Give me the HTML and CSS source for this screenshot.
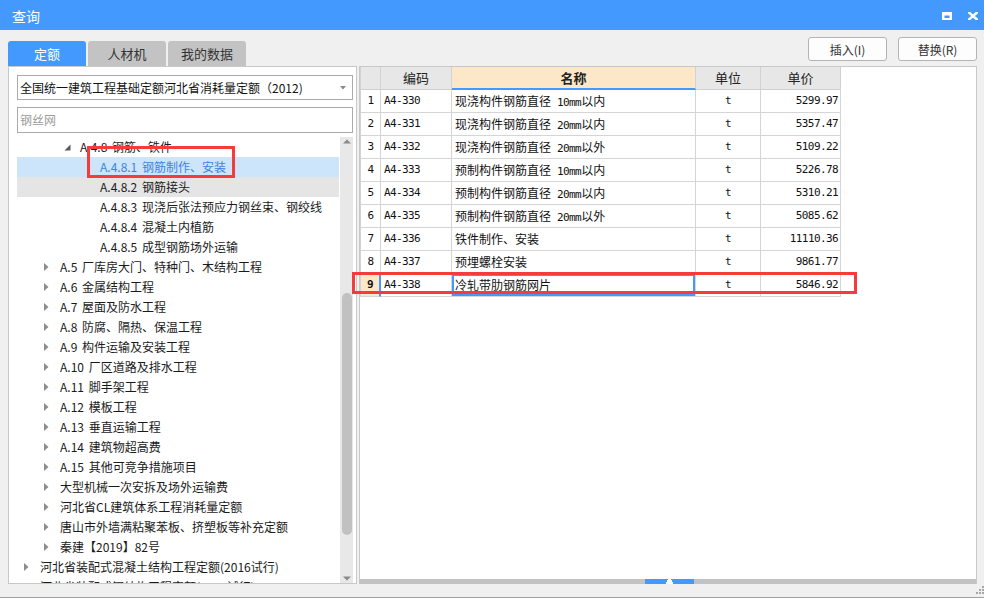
FILE: index.html
```html
<!DOCTYPE html>
<html lang="zh-CN">
<head>
<meta charset="utf-8">
<title>查询</title>
<link rel="stylesheet" href="styles.css">
</head>
<body>
<div class="window">
  <div class="titlebar">
    <span class="title">查询</span>
    <div class="win-ctrls">
      <svg class="ic" width="10" height="8" viewBox="0 0 10 8"><path d="M0 0H10V8H0Z M2.5 3.5V6H7.5V3.5Z" fill="#fff" fill-rule="evenodd"/></svg>
      <svg class="ic" width="10" height="8" viewBox="0 0 10 8"><path d="M1 0.5L9 7.5M9 0.5L1 7.5" stroke="#fff" stroke-width="2.4" stroke-linecap="square"/></svg>
    </div>
  </div>

  <div class="main">
    <div class="tabs">
      <div class="tab active">定额</div>
      <div class="tab">人材机</div>
      <div class="tab">我的数据</div>
    </div>
    <div class="actions">
      <button class="btn">插入(I)</button>
      <button class="btn">替换(R)</button>
    </div>

    <div class="left-panel">
      <div class="select"><span>全国统一建筑工程基础定额河北省消耗量定额（2012)</span><svg class="caret" width="6" height="4" viewBox="0 0 6 4"><path d="M0 0H6L3 3.5Z" fill="#8a8a8a"/></svg></div>
      <div class="search">钢丝网</div>
      <div class="tree-wrap">
        <ul class="tree">
          <li class="l3"><span class="arr"><svg width="7" height="7" viewBox="0 0 7 7"><path d="M6.5 0.5V6.5H0.5Z" fill="#595959"/></svg></span>A.4.8 钢筋、铁件</li>
          <li class="l4 selected"><span class="arr"></span>A.4.8.1 钢筋制作、安装</li>
          <li class="l4 hover"><span class="arr"></span>A.4.8.2 钢筋接头</li>
          <li class="l4"><span class="arr"></span>A.4.8.3 现浇后张法预应力钢丝束、钢绞线</li>
          <li class="l4"><span class="arr"></span>A.4.8.4 混凝土内植筋</li>
          <li class="l4"><span class="arr"></span>A.4.8.5 成型钢筋场外运输</li>
          <li class="l2"><span class="arr"><svg width="5" height="8" viewBox="0 0 5 8"><path d="M0 0L4.5 4L0 8Z" fill="#8c8c8c"/></svg></span>A.5 厂库房大门、特种门、木结构工程</li>
          <li class="l2"><span class="arr"><svg width="5" height="8" viewBox="0 0 5 8"><path d="M0 0L4.5 4L0 8Z" fill="#8c8c8c"/></svg></span>A.6 金属结构工程</li>
          <li class="l2"><span class="arr"><svg width="5" height="8" viewBox="0 0 5 8"><path d="M0 0L4.5 4L0 8Z" fill="#8c8c8c"/></svg></span>A.7 屋面及防水工程</li>
          <li class="l2"><span class="arr"><svg width="5" height="8" viewBox="0 0 5 8"><path d="M0 0L4.5 4L0 8Z" fill="#8c8c8c"/></svg></span>A.8 防腐、隔热、保温工程</li>
          <li class="l2"><span class="arr"><svg width="5" height="8" viewBox="0 0 5 8"><path d="M0 0L4.5 4L0 8Z" fill="#8c8c8c"/></svg></span>A.9 构件运输及安装工程</li>
          <li class="l2"><span class="arr"><svg width="5" height="8" viewBox="0 0 5 8"><path d="M0 0L4.5 4L0 8Z" fill="#8c8c8c"/></svg></span>A.10 厂区道路及排水工程</li>
          <li class="l2"><span class="arr"><svg width="5" height="8" viewBox="0 0 5 8"><path d="M0 0L4.5 4L0 8Z" fill="#8c8c8c"/></svg></span>A.11 脚手架工程</li>
          <li class="l2"><span class="arr"><svg width="5" height="8" viewBox="0 0 5 8"><path d="M0 0L4.5 4L0 8Z" fill="#8c8c8c"/></svg></span>A.12 模板工程</li>
          <li class="l2"><span class="arr"><svg width="5" height="8" viewBox="0 0 5 8"><path d="M0 0L4.5 4L0 8Z" fill="#8c8c8c"/></svg></span>A.13 垂直运输工程</li>
          <li class="l2"><span class="arr"><svg width="5" height="8" viewBox="0 0 5 8"><path d="M0 0L4.5 4L0 8Z" fill="#8c8c8c"/></svg></span>A.14 建筑物超高费</li>
          <li class="l2"><span class="arr"><svg width="5" height="8" viewBox="0 0 5 8"><path d="M0 0L4.5 4L0 8Z" fill="#8c8c8c"/></svg></span>A.15 其他可竞争措施项目</li>
          <li class="l2"><span class="arr"><svg width="5" height="8" viewBox="0 0 5 8"><path d="M0 0L4.5 4L0 8Z" fill="#8c8c8c"/></svg></span>大型机械一次安拆及场外运输费</li>
          <li class="l2"><span class="arr"><svg width="5" height="8" viewBox="0 0 5 8"><path d="M0 0L4.5 4L0 8Z" fill="#8c8c8c"/></svg></span>河北省CL建筑体系工程消耗量定额</li>
          <li class="l2"><span class="arr"><svg width="5" height="8" viewBox="0 0 5 8"><path d="M0 0L4.5 4L0 8Z" fill="#8c8c8c"/></svg></span>唐山市外墙满粘聚苯板、挤塑板等补充定额</li>
          <li class="l2"><span class="arr"><svg width="5" height="8" viewBox="0 0 5 8"><path d="M0 0L4.5 4L0 8Z" fill="#8c8c8c"/></svg></span>秦建【2019】82号</li>
          <li class="l1"><span class="arr"><svg width="5" height="8" viewBox="0 0 5 8"><path d="M0 0L4.5 4L0 8Z" fill="#8c8c8c"/></svg></span>河北省装配式混凝土结构工程定额(2016试行)</li>
          <li class="l1"><span class="arr"><svg width="5" height="8" viewBox="0 0 5 8"><path d="M0 0L4.5 4L0 8Z" fill="#8c8c8c"/></svg></span>河北省装配式钢结构工程定额(2016试行)</li>
        </ul>
        <div class="vscroll">
          <svg class="sarr" width="8" height="5" viewBox="0 0 8 5"><path d="M0 4.5H8L4 0.5Z" fill="#8a8a8a"/></svg>
          <div class="track"><div class="thumb"></div></div>
          <svg class="sarr" width="8" height="5" viewBox="0 0 8 5"><path d="M0 0.5H8L4 4.5Z" fill="#8a8a8a"/></svg>
        </div>
      </div>
    </div>

    <div class="right-panel">
      <div class="grid">
        <div class="hd c0"></div>
        <div class="hd">编码</div>
        <div class="hd active">名称</div>
        <div class="hd">单位</div>
        <div class="hd">单价</div>

        <div class="cell c0 m">1</div><div class="cell code m">A4-330</div><div class="cell name">现浇构件钢筋直径<span class="m"> 10mm</span>以内</div><div class="cell unit m">t</div><div class="cell price m">5299.97</div>
        <div class="cell c0 m">2</div><div class="cell code m">A4-331</div><div class="cell name">现浇构件钢筋直径<span class="m"> 20mm</span>以内</div><div class="cell unit m">t</div><div class="cell price m">5357.47</div>
        <div class="cell c0 m">3</div><div class="cell code m">A4-332</div><div class="cell name">现浇构件钢筋直径<span class="m"> 20mm</span>以外</div><div class="cell unit m">t</div><div class="cell price m">5109.22</div>
        <div class="cell c0 m">4</div><div class="cell code m">A4-333</div><div class="cell name">预制构件钢筋直径<span class="m"> 10mm</span>以内</div><div class="cell unit m">t</div><div class="cell price m">5226.78</div>
        <div class="cell c0 m">5</div><div class="cell code m">A4-334</div><div class="cell name">预制构件钢筋直径<span class="m"> 20mm</span>以内</div><div class="cell unit m">t</div><div class="cell price m">5310.21</div>
        <div class="cell c0 m">6</div><div class="cell code m">A4-335</div><div class="cell name">预制构件钢筋直径<span class="m"> 20mm</span>以外</div><div class="cell unit m">t</div><div class="cell price m">5085.62</div>
        <div class="cell c0 m">7</div><div class="cell code m">A4-336</div><div class="cell name">铁件制作、安装</div><div class="cell unit m">t</div><div class="cell price m">11110.36</div>
        <div class="cell c0 m">8</div><div class="cell code m">A4-337</div><div class="cell name">预埋螺栓安装</div><div class="cell unit m">t</div><div class="cell price m">9861.77</div>
        <div class="cell c0 m cur">9</div><div class="cell code m">A4-338</div><div class="cell name focus">冷轧带肋钢筋网片</div><div class="cell unit m">t</div><div class="cell price m">5846.92</div>
      </div>
      <div class="hsplit"><div class="handle"><svg width="7" height="5" viewBox="0 0 7 5"><path d="M2 0H5V1H6V3H7V5H0V3H1V1H2Z" fill="#fff"/></svg></div></div>
    </div>
  </div>

  <div class="statusbar">
    <svg class="grip" width="8" height="8" viewBox="0 0 8 8"><path d="M6 0H8V2H6Z M3 3H5V5H3Z M6 3H8V5H6Z M0 6H2V8H0Z M3 6H5V8H3Z M6 6H8V8H6Z" fill="#a8a8a8"/></svg>
  </div>
</div>

<div class="mark mark-tree"></div>
<div class="mark mark-row"></div>
</body>
</html>
```

FILE: styles.css
```css
* {
  box-sizing: border-box;
  margin: 0;
  padding: 0;
}

html, body {
  width: 984px;
  height: 598px;
  overflow: hidden;
}

body {
  position: relative;
  background: #f0f0f0;
  font-family: "Noto Sans CJK SC", "Noto Sans", sans-serif;
  font-size: 12px;
  color: #1e1e1e;
}

.window {
  display: flex;
  flex-direction: column;
  height: 598px;
}

/* title bar */
.titlebar {
  height: 30px;
  flex: none;
  background: #4499ff;
  color: #fff;
  display: flex;
  align-items: center;
  justify-content: space-between;
  padding: 0 6px 0 12px;
}

.title {
  font-size: 14px;
  line-height: 30px;
  padding-top: 1px;
}

.win-ctrls {
  display: flex;
  align-items: center;
  gap: 16px;
  padding-top: 1px;
}

.ic {
  display: block;
}

/* main area */
.main {
  flex: none;
  display: grid;
  grid-template-columns: 349px 618px;
  grid-template-rows: 36px 518px;
  column-gap: 2px;
  padding-left: 8px;
}

.tabs {
  align-self: end;
  display: flex;
  gap: 2px;
}

.tab {
  width: 78px;
  height: 25px;
  line-height: 25px;
  text-align: center;
  font-size: 13px;
  color: #333;
  background: #c3c3c3;
  border-radius: 3px 3px 0 0;
}

.tab.active {
  background: #4499ff;
  color: #fff;
}

.actions {
  display: flex;
  justify-content: flex-end;
  align-items: flex-start;
  gap: 11px;
  padding-top: 7px;
}

.btn {
  width: 79px;
  height: 24px;
  border: 1px solid #b4b4b4;
  border-radius: 3px;
  background: #fdfdfd;
  font-family: "Noto Sans CJK SC", "Noto Sans", sans-serif;
  font-size: 12px;
  color: #333;
}

/* left panel */
.left-panel {
  background: #fff;
  border: 1px solid #c8c8c8;
  padding: 8px 3px 0 8px;
  display: flex;
  flex-direction: column;
  min-height: 0;
}

.select {
  height: 25px;
  border: 1px solid #ababab;
  display: flex;
  align-items: center;
  justify-content: space-between;
  padding: 0 6px 0 2px;
  line-height: 23px;
  color: #111;
  flex: none;
}

.caret {
  display: block;
}

.search {
  flex: none;
  margin-top: 7px;
  height: 26px;
  border: 1px solid #ababab;
  padding-left: 2px;
  line-height: 24px;
  color: #9c9c9c;
}

.tree-wrap {
  margin-top: 4px;
  flex: 1;
  min-height: 0;
  display: flex;
  overflow: hidden;
}

.tree {
  list-style: none;
  flex: 1;
  overflow: hidden;
}

.tree li {
  height: 20px;
  line-height: 20px;
  white-space: nowrap;
  display: flex;
  align-items: center;
  color: #1a1a1a;
  word-spacing: 2px;
}

.tree .arr {
  width: 16px;
  flex: none;
  display: flex;
  align-items: center;
}

.tree .arr svg {
  display: block;
}

.tree .l1 { padding-left: 7px; }
.tree .l2 { padding-left: 27px; }
.tree .l3 { padding-left: 47px; }
.tree .l4 { padding-left: 67px; }

.tree .selected {
  background: #cce5fb;
  color: #3b84e0;
}

.tree .hover {
  background: #e5e5e5;
}

.vscroll {
  width: 13px;
  margin-left: 1px;
  flex: none;
  background: #e8e8e8;
  display: flex;
  flex-direction: column;
  align-items: center;
  padding: 2px 0 2px;
}

.sarr {
  display: block;
  flex: none;
}

.track {
  flex: 1;
  width: 100%;
  padding: 149px 1px 41px 2px;
  display: flex;
}

.thumb {
  flex: 1;
  background: #c1c1c1;
  border-radius: 5px;
}

/* right panel */
.right-panel {
  background: #fff;
  border: 1px solid #c8c8c8;
  border-bottom: none;
  display: flex;
  flex-direction: column;
  justify-content: space-between;
  min-height: 0;
}

.grid {
  display: grid;
  grid-template-columns: 21px 71px 244px 65px 80px;
  grid-auto-rows: 23px;
  width: 481px;
}

.hd {
  background: #e7e7e7;
  border-right: 1px solid #d2d2d2;
  border-bottom: 1px solid #cfcfcf;
  text-align: center;
  line-height: 22px;
  font-size: 13px;
  color: #222;
}

.hd.active {
  background: #fde7c9;
  font-weight: bold;
  border-bottom: 2px solid #4499ff;
  color: #222;
}

.c0 {
  border-left: 1px solid #d2d2d2;
}

.cell {
  border-right: 1px solid #d5d5d5;
  border-bottom: 1px solid #d5d5d5;
  line-height: 22px;
  white-space: nowrap;
  overflow: hidden;
  color: #111;
}

.m {
  font-family: "DejaVu Sans Mono", "Liberation Mono", monospace;
  font-size: 11px;
  letter-spacing: -0.6px;
}

.cell.c0 {
  text-align: center;
}

.cell.code,
.cell.name {
  padding-left: 3px;
}

.cell.unit {
  text-align: center;
}

.cell.price {
  text-align: right;
  padding-right: 2px;
}

.cell.cur {
  background: #fde7c9;
  font-weight: bold;
  border-right: 2px solid #4499ff;
}

.cell.focus {
  box-shadow: inset 0 0 0 2px #4499ff;
}

.hsplit {
  height: 5px;
  background: #c2c2c2;
  display: flex;
  justify-content: center;
  padding-left: 2px;
}

.handle {
  width: 49px;
  height: 5px;
  background: #4499ff;
  display: flex;
  justify-content: center;
  align-items: flex-end;
}

.handle svg {
  display: block;
}

/* status bar */
.statusbar {
  flex: 1;
  border-bottom: 1px solid #a0a0a0;
  display: flex;
  justify-content: flex-end;
  align-items: flex-end;
  padding: 0 0 3px 0;
}

.grip {
  display: block;
}

/* red annotation marks drawn over the screenshot */
.mark {
  position: absolute;
  border: 3px solid #f73b3b;
  pointer-events: none;
}

.mark-tree {
  left: 87px;
  top: 146px;
  width: 148px;
  height: 32px;
}

.mark-row {
  left: 352px;
  top: 272px;
  width: 505px;
  height: 22px;
}
```
